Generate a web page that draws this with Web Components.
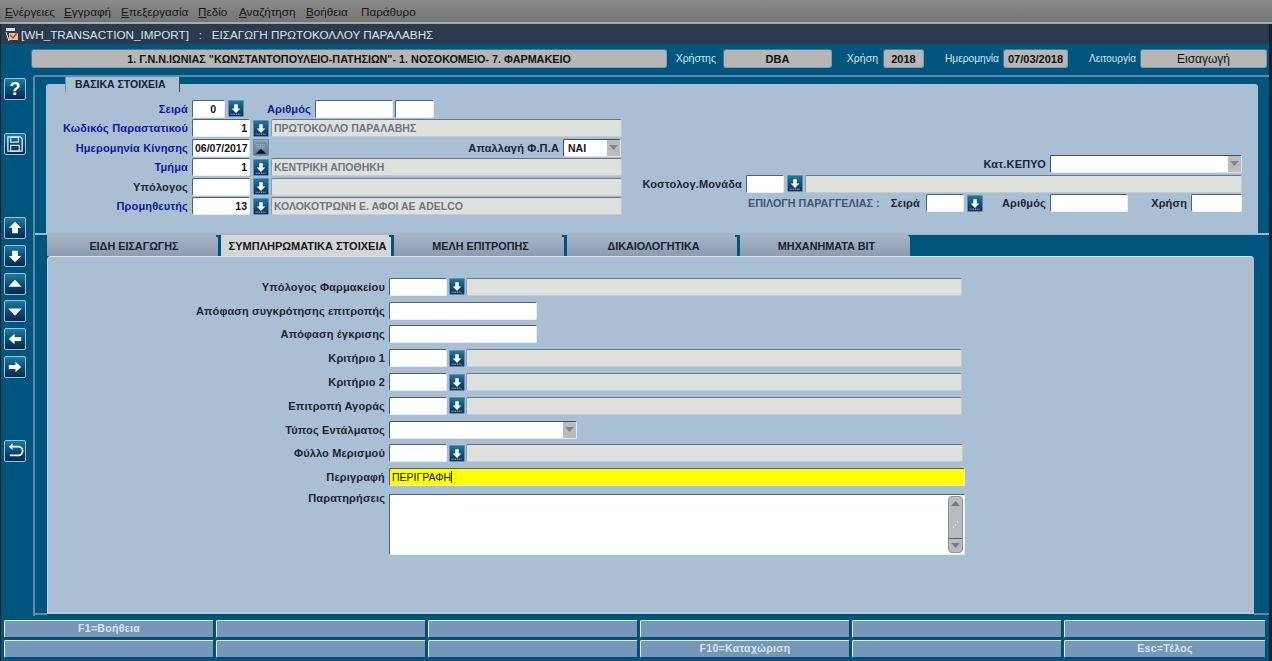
<!DOCTYPE html>
<html lang="el">
<head>
<meta charset="utf-8">
<title>WH_TRANSACTION_IMPORT</title>
<style>
    html, body { margin: 0; height: 100%; overflow: hidden; background: #1d2226; }
    body { font-family: "Liberation Sans", Arial, sans-serif; font-size: 11px; }
</style>
</head>
<body>
<erp-app></erp-app>
<script>
const sans = '"Liberation Sans", Arial, sans-serif';

const ICONS = {
    down: '<path d="M6 3h4v5h3l-5 5-5-5h3z" fill="#fff"/><path d="M2 14.5h12" stroke="#fff" stroke-dasharray="1 1"/>',
    cal: '<path d="M2 2h12v8H2z" fill="#7388a4"/><path d="M3 4.500h10M3 6.500h10M3 8.500h10" stroke="#c6d2df" stroke-dasharray="1 1"/><path d="M2 15l6-5.500 6 5.500z" fill="#0c1626"/>',
    save: '<path d="M3 3h13l2 2v13H3z" fill="none" stroke="#dfe8ef" stroke-width="1.4"/><path d="M6 3.500h8v5H6zM6 12h9v6H6z" fill="none" stroke="#dfe8ef" stroke-width="1.2"/>',
    up: '<path d="M10.500 4l6.500 6.500h-3.500V16h-6v-5.500H4z" fill="#fff"/>',
    dn: '<path d="M7.500 5h6v5.500H17L10.500 17 4 10.500h3.500z" fill="#fff"/>',
    tup: '<path d="M10.500 6l7 7.500h-14z" fill="#fff"/>',
    tdn: '<path d="M3.500 8h14l-7 7.500z" fill="#fff"/>',
    left: '<path d="M4 10.500L10 5v3.500h7v4h-7V16z" fill="#fff"/>',
    right: '<path d="M17 10.500L11 5v3.500H4v4h7V16z" fill="#fff"/>',
    undo: '<path d="M6 6h8a4.500 4.500 0 0 1 0 9H5" fill="none" stroke="#fff" stroke-width="1.8"/><path d="M8 2.500L4 6l4 3.500z" fill="#fff"/>'
};

class ErpMenubar extends HTMLElement {
    connectedCallback() {
        this.attachShadow({mode: 'open'}).innerHTML = `
        <style>
            :host {
                display: flex;
                height: 22px;
                align-items: center;
                padding-left: 5px;
                color: #161616;
                font: 11.700px ${sans};
                background: linear-gradient(#8a8a8a, #757575);
                border-bottom: 2px solid #a9a9a9;
            }
            span { white-space: nowrap; }
            u { text-underline-offset: 1px; }
        </style>
        <span style="width:59px"><u>Ε</u>νέργειες</span>
        <span style="width:57px"><u>Ε</u>γγραφή</span>
        <span style="width:77px"><u>Ε</u>πεξεργασία</span>
        <span style="width:41px"><u>Π</u>εδίο</span>
        <span style="width:67px"><u>Α</u>ναζήτηση</span>
        <span style="width:55px"><u>Β</u>οήθεια</span>
        <span>Παράθυρο</span>`;
    }
}

class ErpTitlebar extends HTMLElement {
    connectedCallback() {
        this.attachShadow({mode: 'open'}).innerHTML = `
        <style>
            :host {
                display: flex;
                height: 20px;
                align-items: center;
                gap: 1px;
                padding-left: 4px;
                color: #dde3ea;
                font: 11.700px ${sans};
                background: #2a3a4f;
            }
            svg { width: 15px; height: 15px; flex: none; }
            span { white-space: pre; }
        </style>
        <svg viewBox="0 0 15 15">
            <path d="M1 1h9v3H1z" fill="#d8e4f0"/><path d="M3 4h11v10H3z" fill="#1c2f8a"/>
            <path d="M4 6h9v7H4z" fill="#e8d24a"/><path d="M5 8l3 3 4-5" stroke="#c0308a" stroke-width="1.500" fill="none"/>
            <path d="M1 5l3 9" stroke="#f4f4f4"/>
        </svg>
        <span>[WH_TRANSACTION_IMPORT]   :   ΕΙΣΑΓΩΓΗ ΠΡΩΤΟΚΟΛΛΟΥ ΠΑΡΑΛΑΒΗΣ</span>`;
    }
}

class ErpBox extends HTMLElement {
    // grey display box in the info bar
    connectedCallback() {
        this.attachShadow({mode: 'open'}).innerHTML = `
        <style>
            :host {
                display: flex;
                box-sizing: border-box;
                height: 19px;
                align-items: center;
                justify-content: center;
                flex: none;
                color: #111;
                font: bold 11px ${sans};
                background: #b6b6b6;
                border: 1px solid #7f9db5;
                border-top-color: #56748f;
                border-left-color: #56748f;
                border-radius: 3px;
                white-space: nowrap;
            }
        </style><slot></slot>`;
    }
}

class ErpInfobar extends HTMLElement {
    connectedCallback() {
        this.attachShadow({mode: 'open'}).innerHTML = `
        <style>
            :host {
                display: flex;
                height: 31px;
                box-sizing: border-box;
                padding: 5px 0 0 30px;
                align-items: flex-start;
            }
            b { font: 10.500px/19px ${sans}; color: #d9e6ef; text-align: right; flex: none; white-space: nowrap; box-sizing: border-box; }
        </style>
        <erp-box style="width:636px;font-size:10.800px">1. Γ.Ν.Ν.ΙΩΝΙΑΣ "ΚΩΝΣΤΑΝΤΟΠΟΥΛΕΙΟ-ΠΑΤΗΣΙΩΝ"- 1. ΝΟΣΟΚΟΜΕΙΟ- 7. ΦΑΡΜΑΚΕΙΟ</erp-box>
        <b style="width:56px;padding-right:7px">Χρήστης</b>
        <erp-box style="width:109px">DBA</erp-box>
        <b style="width:51px;padding-right:5px">Χρήση</b>
        <erp-box style="width:41px">2018</erp-box>
        <b style="width:79px;padding-right:4px;font-size:10.200px">Ημερομηνία</b>
        <erp-box style="width:65px">07/03/2018</erp-box>
        <b style="width:72px;padding-right:4px;font-size:10px">Λειτουργία</b>
        <erp-box style="width:127px;font-weight:normal;font-size:12px">Εισαγωγή</erp-box>`;
    }
}

class ErpToolbutton extends HTMLElement {
    connectedCallback() {
        let icon = this.getAttribute('icon');
        this.attachShadow({mode: 'open'}).innerHTML = `
        <style>
            :host {
                display: flex;
                box-sizing: border-box;
                width: 22px;
                height: 22px;
                align-items: center;
                justify-content: center;
                color: #fff;
                font: bold 18px ${sans};
                background: linear-gradient(#1d7aa3, #0a5379 45%, #07284a);
                border: 1px solid #9fc0d2;
                border-radius: 2px;
            }
            svg { width: 20px; height: 20px; }
        </style>
        ${icon ? `<svg viewBox="0 0 21 21">${ICONS[icon]}</svg>` : '<slot></slot>'}`;
    }
}

class ErpToolbar extends HTMLElement {
    connectedCallback() {
        this.attachShadow({mode: 'open'}).innerHTML = `
        <style>
            :host {
                display: flex;
                flex-direction: column;
                flex: none;
                box-sizing: border-box;
                width: 32px;
                padding: 3px 0 0 3px;
            }
        </style>
        <erp-toolbutton>?</erp-toolbutton>
        <erp-toolbutton icon="save" style="margin-top:33px"></erp-toolbutton>
        <erp-toolbutton icon="up" style="margin-top:62px"></erp-toolbutton>
        <erp-toolbutton icon="dn" style="margin-top:6px"></erp-toolbutton>
        <erp-toolbutton icon="tup" style="margin-top:6px"></erp-toolbutton>
        <erp-toolbutton icon="tdn" style="margin-top:5px"></erp-toolbutton>
        <erp-toolbutton icon="left" style="margin-top:6px"></erp-toolbutton>
        <erp-toolbutton icon="right" style="margin-top:6px"></erp-toolbutton>
        <erp-toolbutton icon="undo" style="margin-top:62px"></erp-toolbutton>`;
    }
}

class ErpField extends HTMLElement {
    // kind: input (white), ro (grey), yellow
    connectedCallback() {
        let kind = this.getAttribute('kind') || 'input';
        let width = this.getAttribute('w');
        let colors = {
            input: 'background:#fff;color:#111;',
            ro: 'background:#dfe1df;color:#6d7682;border-top-color:#66768c;border-left-color:#8d9db0;border-right-color:#c3ccd5;border-bottom-color:#c3ccd5;',
            yellow: 'background:#ffff00;color:#111;'
        };
        this.attachShadow({mode: 'open'}).innerHTML = `
        <style>
            :host {
                display: flex;
                flex: none;
                box-sizing: border-box;
                height: ${this.getAttribute('h') || 18}px;
                width: ${width}px;
                align-items: center;
                padding: 0 ${this.getAttribute('pad') || 2}px 0 2px;
                font: ${this.getAttribute('weight') || 'bold'} 10.500px ${sans};
                white-space: nowrap;
                border: 1px solid #e6edf3;
                border-top-color: #4f5f78;
                border-left-color: #4f5f78;
                border-radius: 2px;
                ${colors[kind]}
                justify-content: ${this.hasAttribute('right') ? 'flex-end' : 'flex-start'};
            }
        </style><slot></slot>`;
    }
}

class ErpSelect extends HTMLElement {
    connectedCallback() {
        this.attachShadow({mode: 'open'}).innerHTML = `
        <style>
            :host {
                display: flex;
                flex: none;
                box-sizing: border-box;
                height: 18px;
                width: ${this.getAttribute('w')}px;
                align-items: stretch;
                font: bold 10.500px/16px ${sans};
                color: #111;
                background: #fff;
                border: 1px solid #dfe8f0;
                border-top-color: #3f4f68;
                border-left-color: #3f4f68;
                border-radius: 2px;
            }
            .value { flex: 1; padding-left: 4px; }
            .arrow { width: 13px; background: #bcbcbc; display: flex; align-items: center; justify-content: center; }
            svg { width: 9px; height: 5px; }
        </style>
        <div class="value"><slot></slot></div>
        <div class="arrow"><svg viewBox="0 0 9 5"><path d="M0 0h9L4.500 5z" fill="#7c8794"/></svg></div>`;
    }
}

class ErpLov extends HTMLElement {
    // small list of values / calendar button
    connectedCallback() {
        let cal = this.hasAttribute('cal');
        this.attachShadow({mode: 'open'}).innerHTML = `
        <style>
            :host {
                display: block;
                flex: none;
                box-sizing: border-box;
                width: 16px;
                height: 17px;
                margin: 0 2px 0 3px;
                background: ${cal ? 'linear-gradient(#8ea3bc, #5f7690)' : 'linear-gradient(#1f789f, #0d4a72 60%, #0a2f58)'};
                border: 1px solid #6a8aa6;
                border-radius: 1px;
            }
            svg { display: block; width: 14px; height: 15px; }
        </style>
        <svg viewBox="0 0 16 16">${ICONS[cal ? 'cal' : 'down']}</svg>`;
    }
}

class ErpLabel extends HTMLElement {
    connectedCallback() {
        let width = this.getAttribute('w');
        this.attachShadow({mode: 'open'}).innerHTML = `
        <style>
            :host {
                display: block;
                flex: none;
                ${width ? `width: ${width}px;` : ''}
                margin-right: 4px;
                text-align: right;
                font: bold 11px ${sans};
                letter-spacing: 0.150px;
                color: ${this.hasAttribute('req') ? '#0b1a9a' : '#1c2430'};
                white-space: nowrap;
            }
        </style><slot></slot>`;
    }
}

class ErpRow extends HTMLElement {
    connectedCallback() {
        this.attachShadow({mode: 'open'}).innerHTML = `
        <style>
            :host {
                display: flex;
                align-items: center;
                height: ${this.getAttribute('h') || 19.5}px;
            }
        </style><slot></slot>`;
    }
}

class ErpBasic extends HTMLElement {
    connectedCallback() {
        this.attachShadow({mode: 'open'}).innerHTML = `
        <style>
            :host {
                display: flex;
                position: relative;
                height: 149px;
                flex: none;
                background: #a9bfd4;
                border-radius: 3px 3px 0 0;
            }
            .tab {
                position: absolute;
                left: 19px;
                top: -7px;
                box-sizing: border-box;
                width: 115px;
                height: 15px;
                padding: 1px 0 0 9px;
                background: #a9bfd4;
                border-left: 1px solid #6f8ba6;
                border-right: 1px solid #34506e;
                font: bold 10.500px/13px ${sans};
                color: #14202e;
            }
            .left { width: 576px; padding-top: 15px; flex: none; }
            .right { margin-left: 18px; width: 602px; padding-top: 70px; }
            .pick { font: bold 10.800px ${sans}; color: #44566c; margin: 0 9px 0 108px; white-space: nowrap; width: 133px; flex: none; }
        </style>
        <div class="tab">ΒΑΣΙΚΑ ΣΤΟΙΧΕΙΑ</div>
        <div class="left">
            <erp-row>
                <erp-label w="142" req>Σειρά</erp-label>
                <erp-field w="33" right pad="8">0</erp-field><erp-lov></erp-lov>
                <erp-label w="65" req>Αριθμός</erp-label>
                <erp-field w="78"></erp-field>
                <erp-field w="39" style="margin-left:2px"></erp-field>
            </erp-row>
            <erp-row>
                <erp-label w="142" req>Κωδικός Παραστατικού</erp-label>
                <erp-field w="58" right>1</erp-field><erp-lov></erp-lov>
                <erp-field w="351" kind="ro">ΠΡΩΤΟΚΟΛΛΟ ΠΑΡΑΛΑΒΗΣ</erp-field>
            </erp-row>
            <erp-row>
                <erp-label w="142" req>Ημερομηνία Κίνησης</erp-label>
                <erp-field w="58">06/07/2017</erp-field><erp-lov cal></erp-lov>
                <erp-label w="288">Απαλλαγή Φ.Π.Α</erp-label>
                <erp-select w="58">ΝΑΙ</erp-select>
            </erp-row>
            <erp-row>
                <erp-label w="142" req>Τμήμα</erp-label>
                <erp-field w="58" right>1</erp-field><erp-lov></erp-lov>
                <erp-field w="351" kind="ro">ΚΕΝΤΡΙΚΗ ΑΠΟΘΗΚΗ</erp-field>
            </erp-row>
            <erp-row>
                <erp-label w="142">Υπόλογος</erp-label>
                <erp-field w="58"></erp-field><erp-lov></erp-lov>
                <erp-field w="351" kind="ro"></erp-field>
            </erp-row>
            <erp-row>
                <erp-label w="142" req>Προμηθευτής</erp-label>
                <erp-field w="58" right>13</erp-field><erp-lov></erp-lov>
                <erp-field w="351" kind="ro">ΚΟΛΟΚΟΤΡΩΝΗ Ε. ΑΦΟΙ ΑΕ ADELCO</erp-field>
            </erp-row>
        </div>
        <div class="right">
            <erp-row h="19.700" style="justify-content:flex-end">
                <erp-label>Κατ.ΚΕΠΥΟ</erp-label>
                <erp-select w="192"></erp-select>
            </erp-row>
            <erp-row h="19.700">
                <erp-label w="102">Κοστολογ.Μονάδα</erp-label>
                <erp-field w="38"></erp-field><erp-lov></erp-lov>
                <erp-field w="437" kind="ro"></erp-field>
            </erp-row>
            <erp-row h="19.700">
                <span class="pick">ΕΠΙΛΟΓΗ ΠΑΡΑΓΓΕΛΙΑΣ :</span>
                <erp-label w="30">Σειρά</erp-label>
                <erp-field w="38" style="margin-left:2px"></erp-field><erp-lov></erp-lov>
                <erp-label w="61">Αριθμός</erp-label>
                <erp-field w="78"></erp-field>
                <erp-label w="59">Χρήση</erp-label>
                <erp-field w="51"></erp-field>
            </erp-row>
        </div>`;
    }
}

class ErpTabs extends HTMLElement {
    connectedCallback() {
        let labels = ['ΕΙΔΗ ΕΙΣΑΓΩΓΗΣ', 'ΣΥΜΠΛΗΡΩΜΑΤΙΚΑ ΣΤΟΙΧΕΙΑ', 'ΜΕΛΗ ΕΠΙΤΡΟΠΗΣ', 'ΔΙΚΑΙΟΛΟΓΗΤΙΚΑ', 'ΜΗΧΑΝΗΜΑΤΑ ΒΙΤ'];
        let active = Number(this.getAttribute('active'));
        this.attachShadow({mode: 'open'}).innerHTML = `
        <style>
            :host {
                display: flex;
                flex: none;
                gap: 3px;
                height: 21px;
            }
            .tab {
                position: relative;
                box-sizing: border-box;
                width: 170px;
                padding: 3px 0 0 3px;
                text-align: center;
                font: bold 10.800px/16px ${sans};
                color: #18222e;
                background: linear-gradient(#a9b5c6, #8d9cb1);
            }
            .tab:nth-child(-n+2) { width: 171px; }
            .tab:last-child { border-radius: 0 4px 0 0; }
            .tab:not(:last-child)::after {
                content: '';
                position: absolute;
                right: -5px;
                top: 0;
                width: 7px;
                height: 2px;
                background: #00557f;
            }
            .active {
                background: #d4d6d6;
                color: #10161e;
                font-size: 11px;
            }
        </style>
        ${labels.map((label, i) => `<div class="tab${i === active ? ' active' : ''}">${label}</div>`).join('')}`;
    }
}

class ErpScrollbar extends HTMLElement {
    connectedCallback() {
        this.attachShadow({mode: 'open'}).innerHTML = `
        <style>
            :host {
                display: flex;
                flex-direction: column;
                flex: none;
                box-sizing: border-box;
                width: 15px;
                background: #b9bcbf;
                border: 1px solid #8a94a0;
                border-radius: 4px;
            }
            .cap { height: 13px; display: flex; align-items: center; justify-content: center; flex: none; }
            .cap:first-child { border-bottom: 1px solid #4f5f78; }
            .cap:last-child { border-top: 1px solid #4f5f78; }
            .mid { flex: 1; display: flex; align-items: center; justify-content: center; }
            svg { display: block; }
        </style>
        <div class="cap"><svg width="9" height="5"><path d="M0 5h9L4.500 0z" fill="#6e7a8c"/></svg></div>
        <div class="mid"><svg width="7" height="7"><path d="M1 6h1M5 1h1M3 4h1" stroke="#fff"/></svg></div>
        <div class="cap"><svg width="9" height="5"><path d="M0 0h9L4.500 5z" fill="#6e7a8c"/></svg></div>`;
    }
}

class ErpSupplement extends HTMLElement {
    connectedCallback() {
        let lovRow = (label, w) => `
            <erp-row h="23.800">
                <erp-label w="337">${label}</erp-label>
                <erp-field w="58"></erp-field><erp-lov style="margin:0 1px 0 2px"></erp-lov>
                <erp-field w="${w}" kind="ro"></erp-field>
            </erp-row>`;
        this.attachShadow({mode: 'open'}).innerHTML = `
        <style>
            :host {
                display: block;
                flex: 1;
                box-sizing: border-box;
                padding-top: 18px;
                background: #a9bfd4;
                border-top: 1px solid #dfe6ea;
                border-left: 1px solid #c9d2d8;
                border-bottom: 2px solid #bcc8d3;
                border-radius: 4px 4px 0 0;
            }
            .memo {
                display: flex;
                box-sizing: border-box;
                width: 576px;
                height: 61px;
                padding: 1px;
                background: #fff;
                justify-content: flex-end;
                border: 1px solid #e6edf3;
                border-top-color: #4f5f78;
                border-left-color: #4f5f78;
            }
            .top { align-items: flex-start; display: flex; margin-top: 5px; }
            .top erp-label { margin-top: -2px; }
            .caret { display: inline-block; width: 1px; height: 12px; background: #111; vertical-align: -2px; }
        </style>
        ${lovRow('Υπόλογος Φαρμακείου', 496)}
        <erp-row h="23.800">
            <erp-label w="337">Απόφαση συγκρότησης επιτροπής</erp-label>
            <erp-field w="148"></erp-field>
        </erp-row>
        <erp-row h="23.800">
            <erp-label w="337">Απόφαση έγκρισης</erp-label>
            <erp-field w="148"></erp-field>
        </erp-row>
        ${lovRow('Κριτήριο 1', 496)}
        ${lovRow('Κριτήριο 2', 496)}
        ${lovRow('Επιτροπή Αγοράς', 496)}
        <erp-row h="23.800">
            <erp-label w="337">Τύπος Εντάλματος</erp-label>
            <erp-select w="188"></erp-select>
        </erp-row>
        ${lovRow('Φύλλο Μερισμού', 497)}
        <erp-row h="23.800">
            <erp-label w="337">Περιγραφή</erp-label>
            <erp-field w="576" kind="yellow" weight="normal">ΠΕΡΙΓΡΑΦΗ<span class="caret"></span></erp-field>
        </erp-row>
        <div class="top">
            <erp-label w="337">Παρατηρήσεις</erp-label>
            <div class="memo"><erp-scrollbar></erp-scrollbar></div>
        </div>`;
    }
}

class ErpFooter extends HTMLElement {
    connectedCallback() {
        let keys = ['F1=Βοήθεια', '', '', '', '', '', '', '', '', 'F10=Καταχώριση', '', 'Esc=Τέλος'];
        this.attachShadow({mode: 'open'}).innerHTML = `
        <style>
            :host {
                display: grid;
                grid-template-columns: repeat(5, 210px) 202px;
                grid-auto-rows: 18px;
                gap: 2px;
                flex: none;
                padding: 4px 0 3px 3px;
            }
            div {
                box-sizing: border-box;
                text-align: center;
                font: bold 10.500px/15px ${sans};
                letter-spacing: 0.300px;
                color: #dbe5ee;
                background: #7598b8;
                border: 1px solid #123f63;
                border-top-color: #e4edf3;
                border-left-color: #e4edf3;
                border-radius: 2px;
            }
        </style>
        ${keys.map(key => `<div>${key}</div>`).join('')}`;
    }
}

class ErpApp extends HTMLElement {
    connectedCallback() {
        this.attachShadow({mode: 'open'}).innerHTML = `
        <style>
            :host { display: flex; flex-direction: column; height: 661px; width: 1272px; }
            .window {
                display: flex;
                flex-direction: column;
                flex: 1;
                min-height: 0;
                width: 1268px;
                margin-left: 1px;
                background: #00557f;
                border-right: 1px solid #101c28;
            }
            .main { display: flex; flex: 1; min-height: 0; }
            .content {
                display: flex;
                flex-direction: column;
                flex: 1;
                min-width: 0;
                border-top: 2px solid #5f8aa8;
                border-left: 2px solid #5f8aa8;
                border-radius: 3px 0 0 0;
            }
            .top { padding: 7px 11px 0 11px; flex: none; }
            .lower {
                position: relative;
                display: flex;
                flex-direction: column;
                flex: 1;
                padding: 0 15px 2px 12px;
                border-top: 2px solid #9fb9cc;
            }
            .lower::before, .lower::after {
                content: '';
                position: absolute;
                bottom: 1px;
                height: 2px;
                background: #5f8aa8;
            }
            .lower::before { left: 0; width: 12px; }
            .lower::after { right: 0; width: 15px; }
        </style>
        <erp-menubar></erp-menubar>
        <div class="window">
            <erp-titlebar></erp-titlebar>
            <erp-infobar></erp-infobar>
            <div class="main">
                <erp-toolbar></erp-toolbar>
                <div class="content">
                    <div class="top"><erp-basic></erp-basic></div>
                    <div class="lower">
                        <erp-tabs active="1"></erp-tabs>
                        <erp-supplement></erp-supplement>
                    </div>
                </div>
            </div>
            <erp-footer></erp-footer>
        </div>`;
    }
}

customElements.define('erp-menubar', ErpMenubar);
customElements.define('erp-titlebar', ErpTitlebar);
customElements.define('erp-box', ErpBox);
customElements.define('erp-infobar', ErpInfobar);
customElements.define('erp-toolbutton', ErpToolbutton);
customElements.define('erp-toolbar', ErpToolbar);
customElements.define('erp-field', ErpField);
customElements.define('erp-select', ErpSelect);
customElements.define('erp-lov', ErpLov);
customElements.define('erp-label', ErpLabel);
customElements.define('erp-row', ErpRow);
customElements.define('erp-basic', ErpBasic);
customElements.define('erp-tabs', ErpTabs);
customElements.define('erp-scrollbar', ErpScrollbar);
customElements.define('erp-supplement', ErpSupplement);
customElements.define('erp-footer', ErpFooter);
customElements.define('erp-app', ErpApp);
</script>
</body>
</html>
